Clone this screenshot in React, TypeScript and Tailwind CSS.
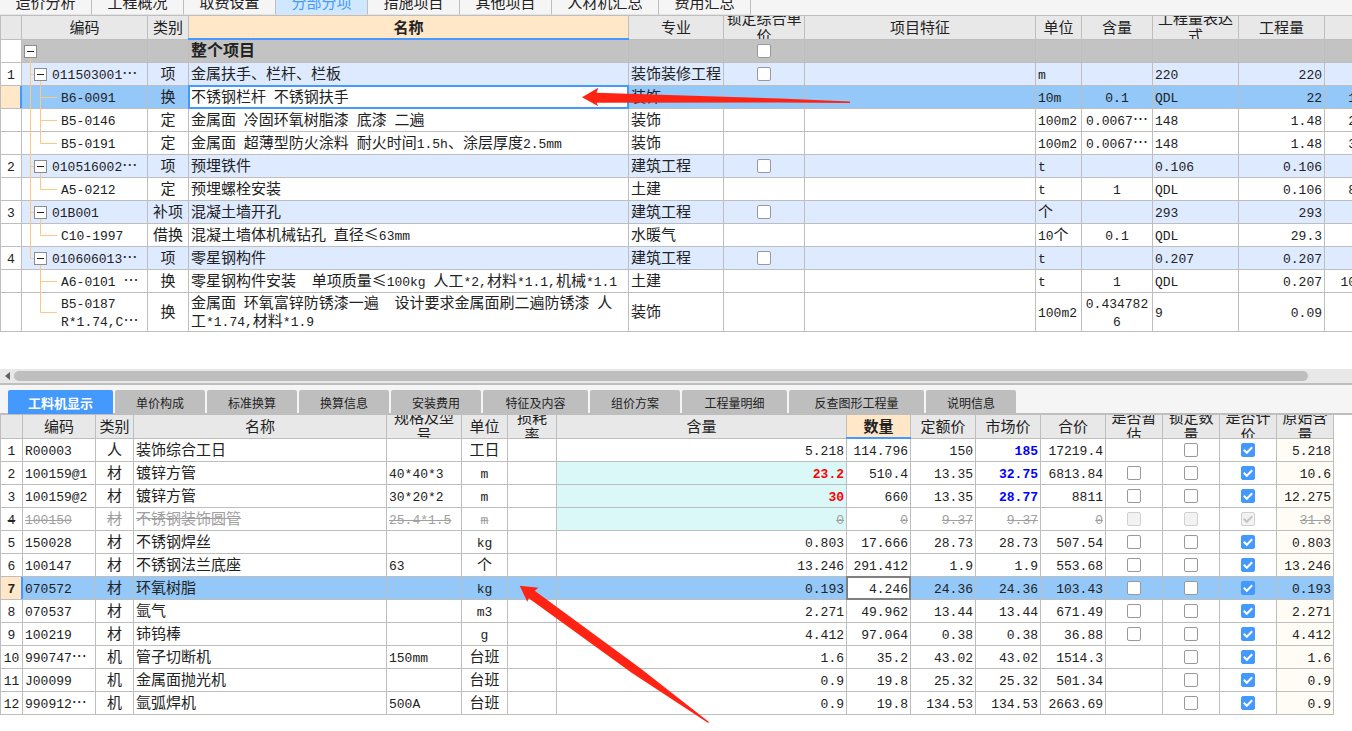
import { Fragment } from 'react';
import type { ReactNode } from 'react';
import clsx from 'clsx';

type Align = 'left' | 'center' | 'right';

interface Column {
  label: string;
  width: string;
  align: Align;
  active?: boolean;
}

interface BillRow {
  no: string;
  level: 0 | 1 | 2;
  code: string;
  kind: string;
  name: string;
  major: string;
  unit: string;
  content: string;
  expr: string;
  qty: string;
  price: string;
  lastChild?: boolean;
  selected?: boolean;
  tall?: boolean;
}

interface Resource {
  code: string;
  kind: string;
  name: string;
  spec?: string;
  unit: string;
  content: string;
  qty: string;
  quota: string;
  market: string;
  total: string;
  origin: string;
  estimate?: boolean;
  edited?: boolean;
  newPrice?: boolean;
  removed?: boolean;
  selected?: boolean;
}

const mainTabs = [
  '造价分析',
  '工程概况',
  '取费设置',
  '分部分项',
  '措施项目',
  '其他项目',
  '人材机汇总',
  '费用汇总',
];

const detailTabs = [
  { label: '工料机显示', width: 'w-[105px]' },
  { label: '单价构成', width: 'w-[90px]' },
  { label: '标准换算', width: 'w-[90px]' },
  { label: '换算信息', width: 'w-[90px]' },
  { label: '安装费用', width: 'w-[90px]' },
  { label: '特征及内容', width: 'w-[105px]' },
  { label: '组价方案', width: 'w-[90px]' },
  { label: '工程量明细', width: 'w-[105px]' },
  { label: '反查图形工程量', width: 'w-[135px]' },
  { label: '说明信息', width: 'w-[90px]' },
];

const billColumns: Column[] = [
  { label: '', width: 'w-[22px]', align: 'center' },
  { label: '编码', width: 'w-[126px]', align: 'left' },
  { label: '类别', width: 'w-[41px]', align: 'center' },
  { label: '名称', width: '', align: 'left', active: true },
  { label: '专业', width: 'w-[95px]', align: 'left' },
  { label: '锁定综合单\n价', width: 'w-[81px]', align: 'center' },
  { label: '项目特征', width: 'w-[231px]', align: 'left' },
  { label: '单位', width: 'w-[46px]', align: 'left' },
  { label: '含量', width: 'w-[71px]', align: 'center' },
  { label: '工程量表达\n式', width: 'w-[86px]', align: 'left' },
  { label: '工程量', width: 'w-[86px]', align: 'right' },
  { label: '', width: 'w-[34px]', align: 'right' },
];

const billRows: BillRow[] = [
  { no: '', level: 0, code: '', kind: '', name: '整个项目', major: '', unit: '', content: '', expr: '', qty: '', price: '' },
  { no: '1', level: 1, code: '011503001…', kind: '项', name: '金属扶手、栏杆、栏板', major: '装饰装修工程', unit: 'm', content: '', expr: '220', qty: '220', price: '' },
  { no: '', level: 2, code: 'B6-0091', kind: '换', name: '不锈钢栏杆 不锈钢扶手', major: '装饰', unit: '10m', content: '0.1', expr: 'QDL', qty: '22', price: '1', selected: true },
  { no: '', level: 2, code: 'B5-0146', kind: '定', name: '金属面 冷固环氧树脂漆 底漆 二遍', major: '装饰', unit: '100m2', content: '0.0067…', expr: '148', qty: '1.48', price: '2' },
  { no: '', level: 2, code: 'B5-0191', kind: '定', name: '金属面 超薄型防火涂料 耐火时间1.5h、涂层厚度2.5mm', major: '装饰', unit: '100m2', content: '0.0067…', expr: '148', qty: '1.48', price: '3', lastChild: true },
  { no: '2', level: 1, code: '010516002…', kind: '项', name: '预埋铁件', major: '建筑工程', unit: 't', content: '', expr: '0.106', qty: '0.106', price: '' },
  { no: '', level: 2, code: 'A5-0212', kind: '定', name: '预埋螺栓安装', major: '土建', unit: 't', content: '1', expr: 'QDL', qty: '0.106', price: '8', lastChild: true },
  { no: '3', level: 1, code: '01B001', kind: '补项', name: '混凝土墙开孔', major: '建筑工程', unit: '个', content: '', expr: '293', qty: '293', price: '' },
  { no: '', level: 2, code: 'C10-1997', kind: '借换', name: '混凝土墙体机械钻孔 直径≤63mm', major: '水暖气', unit: '10个', content: '0.1', expr: 'QDL', qty: '29.3', price: '', lastChild: true },
  { no: '4', level: 1, code: '010606013…', kind: '项', name: '零星钢构件', major: '建筑工程', unit: 't', content: '', expr: '0.207', qty: '0.207', price: '', lastChild: true },
  { no: '', level: 2, code: 'A6-0101 …', kind: '换', name: '零星钢构件安装  单项质量≤100kg 人工*2,材料*1.1,机械*1.1', major: '土建', unit: 't', content: '1', expr: 'QDL', qty: '0.207', price: '10' },
  { no: '', level: 2, code: 'B5-0187\nR*1.74,C…', kind: '换', name: '金属面 环氧富锌防锈漆一遍  设计要求金属面刷二遍防锈漆 人\n工*1.74,材料*1.9', major: '装饰', unit: '100m2', content: '0.434782\n6', expr: '9', qty: '0.09', price: '', lastChild: true, tall: true },
];

const resourceColumns: Column[] = [
  { label: '', width: 'w-[23px]', align: 'center' },
  { label: '编码', width: 'w-[73px]', align: 'left' },
  { label: '类别', width: 'w-[38px]', align: 'center' },
  { label: '名称', width: 'w-[253px]', align: 'left' },
  { label: '规格及型\n号', width: 'w-[75px]', align: 'left' },
  { label: '单位', width: 'w-[46px]', align: 'center' },
  { label: '损耗\n率', width: 'w-[49px]', align: 'center' },
  { label: '含量', width: '', align: 'right' },
  { label: '数量', width: 'w-[64px]', align: 'right', active: true },
  { label: '定额价', width: 'w-[65px]', align: 'right' },
  { label: '市场价', width: 'w-[65px]', align: 'right' },
  { label: '合价', width: 'w-[65px]', align: 'right' },
  { label: '是否暂\n估', width: 'w-[57px]', align: 'center' },
  { label: '锁定数\n量', width: 'w-[57px]', align: 'center' },
  { label: '是否计\n价', width: 'w-[57px]', align: 'center' },
  { label: '原始含\n量', width: 'w-[57px]', align: 'right' },
];

const resources: Resource[] = [
  { code: 'R00003', kind: '人', name: '装饰综合工日', unit: '工日', content: '5.218', qty: '114.796', quota: '150', market: '185', total: '17219.4', origin: '5.218', newPrice: true },
  { code: '100159@1', kind: '材', name: '镀锌方管', spec: '40*40*3', unit: 'm', content: '23.2', qty: '510.4', quota: '13.35', market: '32.75', total: '6813.84', origin: '10.6', estimate: true, edited: true, newPrice: true },
  { code: '100159@2', kind: '材', name: '镀锌方管', spec: '30*20*2', unit: 'm', content: '30', qty: '660', quota: '13.35', market: '28.77', total: '8811', origin: '12.275', estimate: true, edited: true, newPrice: true },
  { code: '100150', kind: '材', name: '不锈钢装饰圆管', spec: '25.4*1.5', unit: 'm', content: '0', qty: '0', quota: '9.37', market: '9.37', total: '0', origin: '31.8', estimate: true, edited: true, removed: true },
  { code: '150028', kind: '材', name: '不锈钢焊丝', unit: 'kg', content: '0.803', qty: '17.666', quota: '28.73', market: '28.73', total: '507.54', origin: '0.803', estimate: true },
  { code: '100147', kind: '材', name: '不锈钢法兰底座', spec: '63', unit: '个', content: '13.246', qty: '291.412', quota: '1.9', market: '1.9', total: '553.68', origin: '13.246', estimate: true },
  { code: '070572', kind: '材', name: '环氧树脂', unit: 'kg', content: '0.193', qty: '4.246', quota: '24.36', market: '24.36', total: '103.43', origin: '0.193', estimate: true, selected: true },
  { code: '070537', kind: '材', name: '氩气', unit: 'm3', content: '2.271', qty: '49.962', quota: '13.44', market: '13.44', total: '671.49', origin: '2.271', estimate: true },
  { code: '100219', kind: '材', name: '铈钨棒', unit: 'g', content: '4.412', qty: '97.064', quota: '0.38', market: '0.38', total: '36.88', origin: '4.412', estimate: true },
  { code: '990747…', kind: '机', name: '管子切断机', spec: '150mm', unit: '台班', content: '1.6', qty: '35.2', quota: '43.02', market: '43.02', total: '1514.3', origin: '1.6' },
  { code: 'J00099', kind: '机', name: '金属面抛光机', unit: '台班', content: '0.9', qty: '19.8', quota: '25.32', market: '25.32', total: '501.34', origin: '0.9' },
  { code: '990912…', kind: '机', name: '氩弧焊机', spec: '500A', unit: '台班', content: '0.9', qty: '19.8', quota: '134.53', market: '134.53', total: '2663.69', origin: '0.9' },
];

const justify = {
  left: 'justify-start text-left',
  center: 'justify-center text-center',
  right: 'justify-end text-right',
};

// Latin runs get the narrower monospace face, Chinese runs keep the base font
const Mixed = ({ text, strike }: { text: string; strike?: boolean }) => (
  <span className="pb-[3px] whitespace-pre">
    {text.split(/([\x20-\x7e]+)/).map((run, i) => (
      <Fragment key={i}>
        {run && (
          <span
            className={clsx(
              i % 2 === 1 &&
                "font-['Liberation_Mono',monospace] text-[13px] leading-none",
              strike && 'line-through'
            )}
          >
            {run}
          </span>
        )}
      </Fragment>
    ))}
  </span>
);

interface CellProps {
  align: Align;
  className?: string;
  tall?: boolean;
  children?: ReactNode;
}

const Cell = ({ align, className, tall, children }: CellProps) => (
  <td
    className={clsx(
      'relative border-r border-b border-[#bebebe] p-0 first:border-l',
      className
    )}
  >
    <div
      className={clsx(
        'flex items-center overflow-hidden px-[2px]',
        tall ? 'h-[38px]' : 'h-[22px]',
        justify[align]
      )}
    >
      {children}
    </div>
  </td>
);

const HeaderRow = ({ columns }: { columns: Column[] }) => (
  <thead>
    <tr>
      {columns.map((col, i) => (
        <th
          key={i}
          scope="col"
          className={clsx(
            'relative border-r border-b border-[#bebebe] p-0 first:border-l',
            col.width,
            col.active ? 'bg-[#ffe7c8] font-bold' : 'bg-[#e8e8e8] font-normal'
          )}
        >
          <div className="flex h-[23px] items-center justify-center overflow-hidden text-center whitespace-pre">
            <span className="pb-[3px]">{col.label}</span>
          </div>
          {col.active && (
            <div className="absolute -right-px -bottom-px -left-px z-10 h-[2px] bg-[#4499ff]" />
          )}
        </th>
      ))}
    </tr>
  </thead>
);

interface CheckProps {
  label: string;
  checked?: boolean;
  disabled?: boolean;
}

const Check = ({ label, checked = false, disabled = false }: CheckProps) => (
  <span className="relative flex">
    <input
      type="checkbox"
      aria-label={label}
      defaultChecked={checked}
      disabled={disabled}
      className="size-[14px] appearance-none rounded-xs border border-[#999999] bg-white checked:border-[#4499ff] checked:bg-[#4499ff] disabled:border-[#d0d0d0] disabled:bg-[#f2f2f2]"
    />
    {checked && (
      <svg
        className={clsx(
          'pointer-events-none absolute inset-0 size-[14px]',
          disabled ? 'text-[#c4c4c4]' : 'text-white'
        )}
        viewBox="0 0 14 14"
        fill="none"
        stroke="currentColor"
        strokeWidth="2"
      >
        <path d="M2.8 6.8L5.8 9.8L11.2 4.2" />
      </svg>
    )}
  </span>
);

const ToggleButton = ({ label }: { label: string }) => (
  <button
    type="button"
    aria-label={label}
    className="relative flex size-[13px] shrink-0 items-center justify-center border border-[#8c8c8c] bg-white"
  >
    <svg className="size-[7px]" viewBox="0 0 7 7" stroke="#222222">
      <path d="M0 3.5H7" />
    </svg>
  </button>
);

const treePath = (row: BillRow, inLastGroup: boolean) => {
  const bottom = row.tall ? 39 : 23;
  const mid = row.tall ? 19.5 : 11.5;
  if (row.level === 0) return `M8.5 12V${bottom}`;
  if (row.level === 1) {
    return `M8.5 0V${row.lastChild ? 11.5 : bottom}M8.5 11.5H12M18.5 12V${bottom}`;
  }
  const trunk = inLastGroup ? '' : `M8.5 0V${bottom}`;
  return `${trunk}M18.5 0V${row.lastChild ? mid : bottom}M18.5 ${mid}H35`;
};

const CodeCell = ({ row, inLastGroup }: { row: BillRow; inLastGroup: boolean }) => (
  <>
    <svg
      className="pointer-events-none absolute top-0 left-0 z-10 h-[39px] w-[36px]"
      viewBox="0 0 36 39"
      fill="none"
      stroke="#fdc883"
    >
      <path d={treePath(row, inLastGroup)} />
    </svg>
    <div
      className={clsx(
        'relative z-20 flex items-center gap-[5px]',
        row.level === 1 && 'pl-[10px]',
        row.level === 2 && 'pl-[37px]'
      )}
    >
      {row.level < 2 && <ToggleButton label={`折叠 ${row.code || row.name}`} />}
      <Mixed text={row.code} />
    </div>
  </>
);

const BillTable = () => {
  const lastGroup = billRows.findIndex((r) => r.level === 1 && r.lastChild);
  return (
    <table className="w-[calc(100%+7px)] table-fixed border-separate border-spacing-0">
      <HeaderRow columns={billColumns} />
      <tbody>
        {billRows.map((row, i) => (
          <tr
            key={i}
            className={clsx(
              row.level === 0 && 'bg-[#c3c3c3]',
              row.level === 1 && 'bg-[#deeaff]',
              row.selected && 'bg-[#93c8f8]'
            )}
          >
            <Cell
              align="center"
              tall={row.tall}
              className={row.selected ? 'bg-[#ffe7c8]' : 'bg-white'}
            >
              <Mixed text={row.no} />
              {row.selected && (
                <div className="absolute top-0 -right-px bottom-0 w-[2px] bg-[#4499ff]" />
              )}
            </Cell>
            <Cell align="left" tall={row.tall}>
              <CodeCell row={row} inLastGroup={i > lastGroup} />
            </Cell>
            <Cell align="center" tall={row.tall}>
              <Mixed text={row.kind} />
            </Cell>
            <Cell
              align="left"
              tall={row.tall}
              className={clsx(
                row.level === 0 && 'text-base leading-[17px] font-bold',
                row.selected && 'bg-white'
              )}
            >
              <Mixed text={row.name} />
              {row.selected && (
                <div className="absolute -inset-px z-10 border-2 border-[#4499ff]" />
              )}
            </Cell>
            <Cell align="left" tall={row.tall}>
              <Mixed text={row.major} />
            </Cell>
            <Cell align="center" tall={row.tall}>
              {row.level < 2 && <Check label={`锁定综合单价 ${row.name}`} />}
            </Cell>
            <Cell align="left" tall={row.tall} />
            <Cell align="left" tall={row.tall}>
              <Mixed text={row.unit} />
            </Cell>
            <Cell align="center" tall={row.tall}>
              <Mixed text={row.content} />
            </Cell>
            <Cell align="left" tall={row.tall}>
              <Mixed text={row.expr} />
            </Cell>
            <Cell align="right" tall={row.tall}>
              <Mixed text={row.qty} />
            </Cell>
            <Cell align="right" tall={row.tall}>
              <Mixed text={row.price} />
            </Cell>
          </tr>
        ))}
      </tbody>
    </table>
  );
};

const ResourceTable = () => (
  <table className="w-full table-fixed border-separate border-spacing-0">
    <HeaderRow columns={resourceColumns} />
    <tbody>
      {resources.map((row, i) => (
        <tr
          key={row.code}
          className={clsx(
            row.selected && 'bg-[#93c8f8]',
            row.removed && 'text-[#a0a0a0]'
          )}
        >
          <Cell
            align="center"
            className={clsx(
              'text-[#222222]',
              row.selected && 'bg-[#ffe7c8] font-bold'
            )}
          >
            <Mixed text={String(i + 1)} strike={row.removed} />
            {row.selected && (
              <div className="absolute top-0 -right-px bottom-0 w-[2px] bg-[#4499ff]" />
            )}
          </Cell>
          <Cell align="left">
            <Mixed text={row.code} strike={row.removed} />
          </Cell>
          <Cell align="center">
            <Mixed text={row.kind} strike={row.removed} />
          </Cell>
          <Cell align="left">
            <Mixed text={row.name} strike={row.removed} />
          </Cell>
          <Cell align="left">
            <Mixed text={row.spec ?? ''} strike={row.removed} />
          </Cell>
          <Cell align="center">
            <Mixed text={row.unit} strike={row.removed} />
          </Cell>
          <Cell align="center" />
          <Cell
            align="right"
            className={clsx(
              row.edited && 'bg-[#dbf8f8]',
              row.edited && !row.removed && 'font-bold text-[#ff0000]'
            )}
          >
            <Mixed text={row.content} strike={row.removed} />
          </Cell>
          <Cell align="right" className={clsx(row.selected && 'bg-white')}>
            <Mixed text={row.qty} strike={row.removed} />
            {row.selected && (
              <div className="absolute -inset-px z-10 border-2 border-[#808080]" />
            )}
          </Cell>
          <Cell align="right">
            <Mixed text={row.quota} strike={row.removed} />
          </Cell>
          <Cell
            align="right"
            className={clsx(row.newPrice && 'font-bold text-[#0000ff]')}
          >
            <Mixed text={row.market} strike={row.removed} />
          </Cell>
          <Cell align="right">
            <Mixed text={row.total} strike={row.removed} />
          </Cell>
          <Cell align="center">
            {row.estimate && (
              <Check label={`是否暂估 ${row.name}`} disabled={row.removed} />
            )}
          </Cell>
          <Cell align="center">
            <Check label={`锁定数量 ${row.name}`} disabled={row.removed} />
          </Cell>
          <Cell align="center">
            <Check label={`是否计价 ${row.name}`} checked disabled={row.removed} />
          </Cell>
          <Cell align="right" className={clsx(!row.selected && 'bg-[#fffcf6]')}>
            <Mixed text={row.origin} strike={row.removed} />
          </Cell>
        </tr>
      ))}
    </tbody>
  </table>
);

const MainTabs = () => (
  <nav className="flex h-[16px] items-end overflow-hidden border-b border-[#bebebe] bg-[#f5f5f5] text-[15px]">
    {mainTabs.map((tab) => (
      <button
        key={tab}
        type="button"
        className={clsx(
          'h-[26px] shrink-0 border-r border-b border-b-[#e4e4e4] border-r-[#bebebe] px-[15px] leading-[26px]',
          tab === '人材机汇总' ? 'w-[107px]' : 'w-[92px]',
          tab === '分部分项' ? 'bg-[#cfe8ff] text-[#4499ff]' : 'text-[#222222]'
        )}
      >
        {tab}
      </button>
    ))}
  </nav>
);

const ScrollBar = () => (
  <div className="flex h-[14px] items-center bg-[#e8e8e8] pr-[44px]">
    <button type="button" aria-label="向左滚动" className="flex w-[14px] shrink-0 justify-center">
      <svg className="h-[8px] w-[5px]" viewBox="0 0 5 8" fill="#606060">
        <path d="M5 0V8L0 4Z" />
      </svg>
    </button>
    <div className="h-[10px] grow rounded-full bg-[#bebebe]" />
  </div>
);

const DetailTabs = () => (
  <div className="flex h-[32px] items-start gap-[2px] border-t-2 border-b-2 border-[#bebebe] bg-[#f5f5f5] pt-[5px] pl-[8px]">
    {detailTabs.map((tab, i) => (
      <button
        key={tab.label}
        type="button"
        className={clsx(
          'h-[24px] shrink-0 rounded-t-xs',
          tab.width,
          i === 0
            ? 'bg-[#4499ff] text-[13px] font-bold text-white'
            : 'bg-[#bebebe] text-[12px]'
        )}
      >
        {tab.label}
      </button>
    ))}
  </div>
);

// Red pointers drawn over both grids
const Arrows = () => (
  <svg
    className="pointer-events-none absolute top-0 left-0 z-30 h-[731px] w-[1352px]"
    viewBox="0 0 1352 731"
    fill="#ff2314"
  >
    <path d="M582 97.3L598.3 87.7L596.5 92.7L780 98.5L850 101.6V103L780 102.6L596.5 102.7L598.3 106.3Z" />
    <path d="M519.7 585.7L538.3 587.7L534.7 590.7L640 668L709 722L708.2 723L632 673L528.7 598.3L527.3 601.7Z" />
  </svg>
);

const App = () => (
  <main
    lang="zh-CN"
    className="relative min-h-screen overflow-hidden bg-white font-['Noto_Sans_CJK_SC',sans-serif] text-[15px] leading-[17px] text-[#222222]"
  >
    <MainTabs />
    <section className="overflow-hidden pb-[37px]">
      <BillTable />
    </section>
    <ScrollBar />
    <DetailTabs />
    <section className="pr-[18px]">
      <ResourceTable />
    </section>
    <Arrows />
  </main>
);

export default App;
